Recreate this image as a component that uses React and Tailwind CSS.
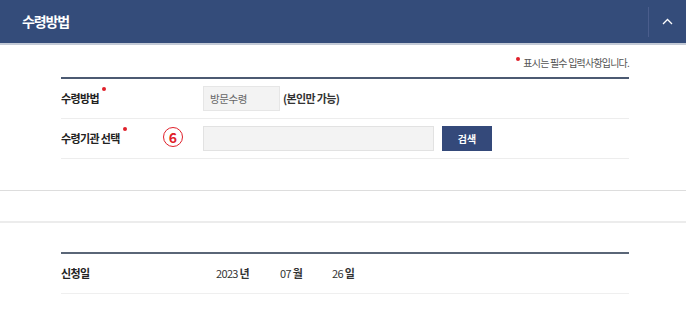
export default function App() {
  const font = { fontFamily: '"Noto Sans CJK KR", "Noto Sans", sans-serif' };
  return (
    <div className="w-[686px] h-[323px] bg-white overflow-hidden" style={font}>
      <div className="h-[43px] bg-[#344c7a] flex items-center justify-between border-b-2 border-[#c3cad6] box-content">
        <div className="pl-[22px] text-white font-bold text-[14px] tracking-[-0.08em]">수령방법</div>
        <div className="flex items-center h-full">
          <div className="w-px h-[30px] bg-[#4a5d8c]" />
          <div className="w-[37px] flex items-center justify-center">
            <svg width="11" height="7" viewBox="0 0 11 7" fill="none">
              <polyline points="1,6 5.5,1.5 10,6" stroke="white" strokeWidth="1.3" />
            </svg>
          </div>
        </div>
      </div>

      <div className="pl-[61px] pr-[57px]">
        <div className="h-[32px] flex items-center justify-end pt-[2px]">
          <span className="w-[4px] h-[4px] rounded-full bg-[#e0202a] mr-[3px] -mt-[6px]" />
          <span className="text-[10px] text-[#555] tracking-[-0.08em]">표시는 필수 입력사항입니다.</span>
        </div>
        <div className="border-t-2 border-[#4c5a72]">
          <div className="h-[40px] flex items-center border-b border-[#ededed]">
            <div className="w-[142px] flex items-start text-[11px] font-bold text-[#222] tracking-[-0.06em]">
              수령방법<span className="w-[4px] h-[4px] rounded-full bg-[#e0202a] ml-[3px] -mt-[3px]" />
            </div>
            <div className="w-[77px] h-[25px] bg-[#f3f3f3] border border-[#e6e6e6] flex items-center pl-[6px] text-[10.5px] text-[#666] tracking-[-0.04em]">방문수령</div>
            <div className="ml-[3px] text-[11px] font-bold text-[#333] tracking-[-0.06em]">(본인만 가능)</div>
          </div>
          <div className="h-[40px] flex items-center border-b border-[#ededed]">
            <div className="w-[102px] flex items-start text-[11px] font-bold text-[#222] tracking-[-0.06em]">
              수령기관 선택<span className="w-[4px] h-[4px] rounded-full bg-[#e0202a] ml-[3px] -mt-[3px]" />
            </div>
            <div className="w-[40px] flex">
              <div className="w-[20px] h-[20px] rounded-full border-[1.5px] border-[#e0202a] flex items-center justify-center text-[#e0202a] text-[14px] font-bold leading-none -mt-[3px]">6</div>
            </div>
            <div className="w-[231px] h-[25px] bg-[#f3f3f3] border border-[#e2e2e2]" />
            <div className="ml-[8px] w-[50px] h-[25px] bg-[#34497a] flex items-center justify-center text-white text-[10px] font-bold">검색</div>
          </div>
        </div>
      </div>

      <div className="mt-[31px] border-t border-[#dddddd] h-[31px]" />
      <div className="border-t-2 border-[#ececec]" />

      <div className="pl-[61px] pr-[57px] pt-[29px]">
        <div className="border-t-2 border-[#5a6677]">
          <div className="h-[40px] flex items-center border-b border-[#efefef] text-[11px]">
            <div className="w-[155px] font-bold text-[#222] tracking-[-0.06em]">신청일</div>
            <div className="flex items-center text-[#333] tracking-[-0.06em]">
              <span className="w-[64px]">2023 <b>년</b></span>
              <span className="w-[52px]">07 <b>월</b></span>
              <span>26 <b>일</b></span>
            </div>
          </div>
        </div>
      </div>
    </div>
  );
}
